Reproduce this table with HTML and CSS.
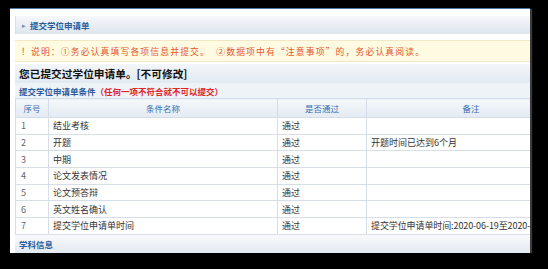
FILE: index.html
```html
<!DOCTYPE html>
<html lang="zh">
<head>
<meta charset="utf-8">
<link rel="stylesheet" href="styles.css">
</head>
<body>
<div class="panel">
  <div class="inner">
    <div class="titlebar"><span class="arrow">▸</span><span class="title">提交学位申请单</span></div>
    <div class="notice">！说明：①务必认真填写各项信息并提交。&nbsp;&nbsp;②数据项中有“注意事项”的，务必认真阅读。</div>
    <div class="heading">您已提交过学位申请单。[不可修改]</div>
    <div class="subhead"><span class="blue">提交学位申请单条件</span><span class="red">（任何一项不符合就不可以提交）</span></div>
    <table class="grid">
      <colgroup>
        <col class="c1"><col class="c2"><col class="c3"><col class="c4">
      </colgroup>
      <thead>
        <tr><th>序号</th><th>条件名称</th><th>是否通过</th><th>备注</th></tr>
      </thead>
      <tbody>
        <tr><td class="num">1</td><td>结业考核</td><td>通过</td><td></td></tr>
        <tr><td class="num">2</td><td>开题</td><td>通过</td><td>开题时间已达到6个月</td></tr>
        <tr><td class="num">3</td><td>中期</td><td>通过</td><td></td></tr>
        <tr><td class="num">4</td><td>论文发表情况</td><td>通过</td><td></td></tr>
        <tr><td class="num">5</td><td>论文预答辩</td><td>通过</td><td></td></tr>
        <tr><td class="num">6</td><td>英文姓名确认</td><td>通过</td><td></td></tr>
        <tr><td class="num">7</td><td>提交学位申请单时间</td><td>通过</td><td class="remark">提交学位申请单时间:2020-06-19至2020-</td></tr>
      </tbody>
    </table>
    <div class="footer">学科信息</div>
  </div>
</div>
</body>
</html>
```

FILE: styles.css
```css
html, body {
  margin: 0;
  padding: 0;
  background: #000;
}
body {
  font-family: "Noto Sans CJK SC", "Noto Sans", sans-serif;
  padding: 8px 0 0 10px;
}
.panel {
  width: 520px;
  height: 244px;
  background: #fff;
  border-top: 1px solid #4d78a6;
  overflow: hidden;
  box-shadow: 2px 1px 1px rgba(120, 120, 120, 0.5);
}
.inner {
  width: 580px;
  padding: 7px 0 0 5px;
}
.titlebar {
  height: 18px;
  display: flex;
  align-items: center;
  background: linear-gradient(#f6f8fb, #dde5ee);
  border-left: 1px solid #d7e0ea;
}
.arrow {
  font-size: 7px;
  color: #7b8ea6;
  margin: 0 4px 0 6px;
}
.title {
  font-size: 8.5px;
  font-weight: bold;
  color: #2b5d9c;
}
.notice {
  margin-top: 6px;
  height: 20px;
  display: flex;
  align-items: center;
  padding-left: 6px;
  background: #fffbe2;
  border-top: 1px solid #f1e9c6;
  border-bottom: 1px solid #f1e9c6;
  color: #e4572e;
  font-size: 8.8px;
  letter-spacing: 1.15px;
}
.heading {
  margin-top: 2px;
  height: 19px;
  display: flex;
  align-items: center;
  padding-left: 4px;
  background: linear-gradient(#f4f7fa, #e2e9f1);
  font-size: 10.7px;
  font-weight: bold;
  color: #111;
}
.subhead {
  height: 15px;
  display: flex;
  align-items: center;
  padding-left: 4px;
  background: #eef3f8;
  font-size: 8.5px;
  font-weight: bold;
}
.blue { color: #2b5d9c; }
.red { color: #e0242a; }
.grid {
  width: 560px;
  border-collapse: collapse;
  table-layout: fixed;
  font-size: 9px;
}
.c1 { width: 33px; }
.c2 { width: 229px; }
.c3 { width: 89px; }
.c4 { width: 209px; }
.grid th {
  height: 18px;
  padding: 0;
  font-weight: normal;
  font-size: 8.5px;
  color: #3a6fb3;
  background: linear-gradient(#f5f8fb, #e3eaf2);
  border: 1px solid #d3dce7;
}
.grid td {
  height: 15.7px;
  padding: 0 0 0 4px;
  color: #333;
  background: #fff;
  border: 1px solid #d6dee8;
  white-space: nowrap;
  overflow: hidden;
}
.grid td.num {
  padding-left: 5px;
  color: #666;
}
.grid td.remark {
  letter-spacing: -0.1px;
}
.footer {
  height: 18px;
  display: flex;
  align-items: center;
  padding-left: 4px;
  background: linear-gradient(#f8fafc, #e3e9f1);
  font-size: 8.5px;
  font-weight: bold;
  color: #2b5d9c;
}
```
